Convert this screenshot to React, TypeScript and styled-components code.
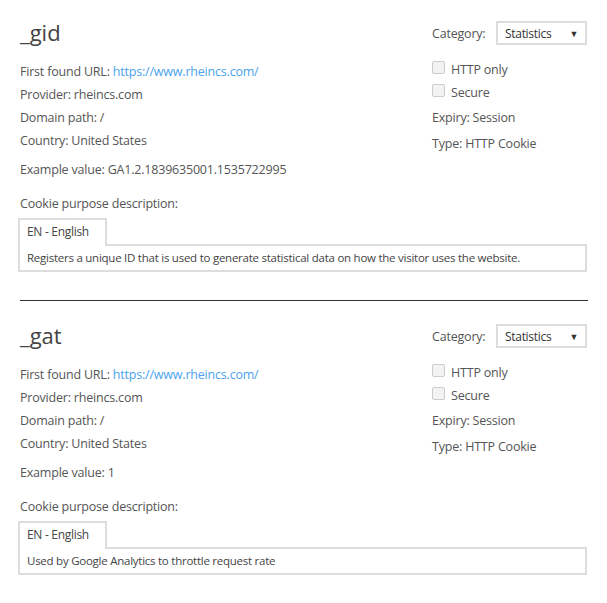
import React from "react";
import styled, { createGlobalStyle } from "styled-components";

const Global = createGlobalStyle`
  html, body { margin: 0; padding: 0; background: #fff; }
  body { font-family: "Open Sans", "Noto Sans", sans-serif; color: #555; }
`;

const Page = styled.div`
  padding: 14px 20px 0 20px;
  width: 567px;
`;

const Section = styled.section`
  display: flex;
  flex-direction: column;
`;

const Top = styled.div`
  display: flex;
  justify-content: space-between;
`;

const Left = styled.div`
  display: flex;
  flex-direction: column;
`;

const Title = styled.h2`
  margin: 0 0 10px 0;
  font-size: 22px;
  font-weight: 400;
  line-height: 36px;
  color: #444;
`;

const InfoLine = styled.div<{ $gap?: number }>`
  font-size: 12.5px;
  line-height: 23px;
  margin-top: ${(p) => p.$gap ?? 0}px;
  letter-spacing: -0.2px;
`;

const Link = styled.a`
  color: #4aa3ee;
  text-decoration: none;
`;

const Right = styled.div`
  width: 155px;
  display: flex;
  flex-direction: column;
  padding-top: 7px;
`;

const CategoryRow = styled.div`
  display: flex;
  align-items: center;
  font-size: 12.5px;
  letter-spacing: -0.2px;
  gap: 9px;
  margin-bottom: 13px;
`;

const Select = styled.div`
  height: 20px;
  border: 2px solid #ddd;
  display: flex;
  align-items: center;
  justify-content: space-between;
  padding: 0 7px 0 7px;
  box-sizing: content-box;
  font-size: 12px;
  color: #333;
  letter-spacing: -0.3px;
  margin-left: auto;
  width: 73px;
`;

const Caret = styled.span`
  font-size: 9px;
  color: #333;
`;

const CheckRow = styled.label`
  display: flex;
  align-items: center;
  gap: 6px;
  font-size: 12.5px;
  letter-spacing: -0.2px;
  line-height: 23px;
`;

const Box = styled.span`
  width: 11px;
  height: 11px;
  border: 1px solid #ccc;
  border-radius: 2px;
  background: #f3f3f3;
  margin-bottom: 4px;
`;

const RightLine = styled.div<{ $gap?: number }>`
  font-size: 12.5px;
  letter-spacing: -0.2px;
  line-height: 23px;
  margin-top: ${(p) => p.$gap ?? 0}px;
`;

const PurposeLabel = styled.div`
  font-size: 12.5px;
  letter-spacing: -0.2px;
  line-height: 23px;
  margin-top: 11px;
`;

const Tabs = styled.div`
  margin-top: 3px;
  margin-left: -2px;
  display: flex;
  flex-direction: column;
`;

const Tab = styled.div`
  align-self: flex-start;
  border: 2px solid #ddd;
  border-bottom: none;
  padding: 0 16px 0 7px;
  height: 26px;
  line-height: 24px;
  font-size: 12px;
  letter-spacing: -0.3px;
  color: #444;
  background: #fff;
  position: relative;
  margin-bottom: -2px;
  z-index: 1;
`;

const Panel = styled.div`
  border: 2px solid #ddd;
  height: 24px;
  line-height: 24px;
  padding: 0 7px;
  font-size: 11.5px;
  letter-spacing: -0.25px;
  color: #444;
`;

const Divider = styled.hr`
  border: none;
  border-top: 1px solid #333;
  margin: 28px 0 16px 0;
  width: 568px;
`;

type Cookie = {
  name: string;
  example: string;
  desc: string;
};

const cookies: Cookie[] = [
  {
    name: "_gid",
    example: "GA1.2.1839635001.1535722995",
    desc: "Registers a unique ID that is used to generate statistical data on how the visitor uses the website.",
  },
  {
    name: "_gat",
    example: "1",
    desc: "Used by Google Analytics to throttle request rate",
  },
];

function CookieCard({ c }: { c: Cookie }) {
  return (
    <Section>
      <Top>
        <Left>
          <Title>{c.name}</Title>
          <InfoLine>
            First found URL: <Link href="#">https://www.rheincs.com/</Link>
          </InfoLine>
          <InfoLine>Provider: rheincs.com</InfoLine>
          <InfoLine>Domain path: /</InfoLine>
          <InfoLine>Country: United States</InfoLine>
          <InfoLine $gap={6}>Example value: {c.example}</InfoLine>
        </Left>
        <Right>
          <CategoryRow>
            Category:
            <Select>
              Statistics <Caret>▼</Caret>
            </Select>
          </CategoryRow>
          <CheckRow>
            <Box /> HTTP only
          </CheckRow>
          <CheckRow>
            <Box /> Secure
          </CheckRow>
          <RightLine $gap={2}>Expiry: Session</RightLine>
          <RightLine $gap={3}>Type: HTTP Cookie</RightLine>
        </Right>
      </Top>
      <PurposeLabel>Cookie purpose description:</PurposeLabel>
      <Tabs>
        <Tab>EN - English</Tab>
        <Panel>{c.desc}</Panel>
      </Tabs>
    </Section>
  );
}

export default function App() {
  return (
    <>
      <Global />
      <Page>
        {cookies.map((c, i) => (
          <React.Fragment key={c.name}>
            {i > 0 && <Divider />}
            <CookieCard c={c} />
          </React.Fragment>
        ))}
      </Page>
    </>
  );
}
